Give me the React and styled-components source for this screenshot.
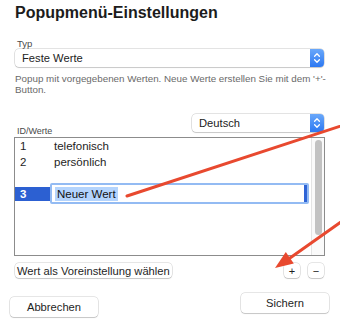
import React from 'react'
import styled, { createGlobalStyle } from 'styled-components'

const GlobalStyle = createGlobalStyle`
  html, body {
    margin: 0;
    padding: 0;
    background: #ffffff;
  }
  body {
    font-family: "Liberation Sans", Arial, sans-serif;
    color: #222;
  }
`

const Page = styled.div`
  position: relative;
  width: 340px;
  height: 327px;
  overflow: hidden;
  background: #fff;
  font-family: "Liberation Sans", Arial, sans-serif;
`

const Title = styled.h1`
  margin: 3px 0 0 15px;
  font-size: 16px;
  line-height: 20px;
  font-weight: 700;
  color: #1c1c1c;
`

const Section = styled.div`
  padding: 0 16px 0 15px;
`

const FieldLabel = styled.div`
  margin: ${p => p.top || 0}px 0 0 2px;
  font-size: ${p => p.size || 9.5}px;
  line-height: ${p => p.size || 11}px;
  color: #4a4a4a;
`

const Select = styled.div`
  display: flex;
  align-items: stretch;
  width: ${p => p.width ? `${p.width}px` : 'auto'};
  height: 18px;
  box-sizing: border-box;
  border-radius: 4px;
  background: #fff;
  box-shadow: 0 0 0 0.5px rgba(0, 0, 0, 0.22), 0 1px 1px rgba(0, 0, 0, 0.12);
`

const SelectValue = styled.div`
  flex: 1;
  display: flex;
  align-items: center;
  padding-left: ${p => p.indent || 7}px;
  font-size: ${p => p.size || 11.2}px;
  color: #222;
`

const Stepper = styled.div`
  width: 14px;
  display: flex;
  align-items: center;
  justify-content: center;
  border-radius: 0 4px 4px 0;
  background: linear-gradient(#6aa8fa, #2c78f2);

  svg {
    display: block;
  }
`

const Hint = styled.p`
  margin: 6px 0 0 0;
  font-size: 9.8px;
  line-height: 11px;
  color: #6a6a6a;
  white-space: nowrap;
`

const ListHeader = styled.div`
  display: flex;
  justify-content: space-between;
  align-items: flex-start;
  margin-top: 19px;
  padding: 0 16px 0 15px;
`

const ListBox = styled.div`
  display: flex;
  margin: 1px 15px 0 14px;
  height: 119px;
  box-sizing: border-box;
  border: 1px solid #8c8c8c;
  background: #fff;
`

const Rows = styled.div`
  flex: 1;
  display: flex;
  flex-direction: column;
  padding-right: 2px;
`

const Row = styled.div`
  display: flex;
  align-items: center;
  height: 16px;
  font-size: 11.5px;
  color: #1e1e1e;
`

const IdCell = styled.div`
  width: 35px;
  box-sizing: border-box;
  padding-left: 5px;
`

const ValueCell = styled.div`
  padding-left: 4px;
`

const EditRow = styled.div`
  display: flex;
  align-items: center;
  height: 21px;
  margin-top: 13px;
  font-size: 11.5px;
`

const SelectedId = styled.div`
  width: 35px;
  height: 14px;
  box-sizing: border-box;
  padding-left: 5px;
  display: flex;
  align-items: center;
  background: #2c60d2;
  color: #fff;
  font-weight: 700;
`

const EditField = styled.div`
  flex: 1;
  height: 21px;
  box-sizing: border-box;
  display: flex;
  align-items: center;
  padding-left: 3px;
  border: 2px solid #93bbf3;
  border-radius: 2px;
  box-shadow: inset -3px 0 0 #2f64d6;
  color: #111;
`

const Selection = styled.span`
  background: #b4d4fd;
  padding: 1px 2px 1px 2px;
`

const Scrollbar = styled.div`
  width: 12px;
  border-left: 1px solid #e4e4e4;
  background: #fafafa;
  display: flex;
  justify-content: center;
  padding-top: 2px;
`

const Thumb = styled.div`
  width: 7px;
  height: 95px;
  border-radius: 4px;
  background: #c2c2c2;
`

const ActionRow = styled.div`
  display: flex;
  align-items: center;
  margin: 7px 16px 0 15px;
  gap: 8px;
`

const Button = styled.button`
  display: flex;
  align-items: center;
  justify-content: center;
  box-sizing: border-box;
  width: ${p => p.width ? `${p.width}px` : 'auto'};
  height: ${p => p.height || 15}px;
  margin: ${p => p.offset || 0}px 0 0 0;
  padding: 0 ${p => p.pad || 0}px;
  border: none;
  border-radius: 4px;
  background: #fff;
  box-shadow: 0 0 0 0.5px rgba(0, 0, 0, 0.2), 0 1px 1px rgba(0, 0, 0, 0.14);
  font-family: "Liberation Sans", Arial, sans-serif;
  font-size: ${p => p.size || 11.2}px;
  color: #1e1e1e;
`

const Spacer = styled.div`
  flex: 1;
`

const Footer = styled.div`
  display: flex;
  justify-content: space-between;
  align-items: flex-start;
  margin-top: 15px;
  padding: 0 11px 0 10px;
`

const Overlay = styled.svg`
  position: absolute;
  left: 0;
  top: 0;
  pointer-events: none;
`

const Chevrons = () => (
  <svg width="14" height="18" viewBox="0 0 14 18">
    <path d="M4.6 7.2 L7 4.8 L9.4 7.2" fill="none" stroke="#fff" strokeWidth="1.3" strokeLinecap="round" strokeLinejoin="round" />
    <path d="M4.6 10.8 L7 13.2 L9.4 10.8" fill="none" stroke="#fff" strokeWidth="1.3" strokeLinecap="round" strokeLinejoin="round" />
  </svg>
)

const PopupSelect = ({ value, width }) => (
  <Select width={width}>
    <SelectValue>{value}</SelectValue>
    <Stepper><Chevrons /></Stepper>
  </Select>
)

const values = [
  { id: 1, label: 'telefonisch' },
  { id: 2, label: 'persönlich' },
]

const App = () => {
  return (
    <Page>
      <GlobalStyle />
      <Title>Popupmenü-Einstellungen</Title>

      <Section>
        <FieldLabel top={15}>Typ</FieldLabel>
        <PopupSelect value="Feste Werte" />
        <Hint>
          Popup mit vorgegebenen Werten. Neue Werte erstellen Sie mit dem '+'-<br />
          Button.
        </Hint>
      </Section>

      <ListHeader>
        <FieldLabel top={13} size={9}>ID/Werte</FieldLabel>
        <PopupSelect value="Deutsch" width={132} />
      </ListHeader>

      <ListBox>
        <Rows>
          {values.map(v => (
            <Row key={v.id}>
              <IdCell>{v.id}</IdCell>
              <ValueCell>{v.label}</ValueCell>
            </Row>
          ))}
          <EditRow>
            <SelectedId>3</SelectedId>
            <EditField><Selection>Neuer Wert</Selection></EditField>
          </EditRow>
        </Rows>
        <Scrollbar><Thumb /></Scrollbar>
      </ListBox>

      <ActionRow>
        <Button pad={2}>Wert als Voreinstellung wählen</Button>
        <Spacer />
        <Button width={16} size={11}>+</Button>
        <Button width={16} size={11}>−</Button>
      </ActionRow>

      <Footer>
        <Button width={88} height={20} offset={4}>Abbrechen</Button>
        <Button width={88} height={20}>Sichern</Button>
      </Footer>

      <Overlay width="340" height="327" viewBox="0 0 340 327">
        <line x1="350" y1="123" x2="127" y2="196" stroke="#e8492f" strokeWidth="3" strokeLinecap="round" />
        <line x1="348" y1="217" x2="290" y2="258" stroke="#e8492f" strokeWidth="3" strokeLinecap="round" />
        <polygon points="275,268 285.8,251.9 293.8,263.5" fill="#e8492f" />
      </Overlay>
    </Page>
  )
}

export default App
